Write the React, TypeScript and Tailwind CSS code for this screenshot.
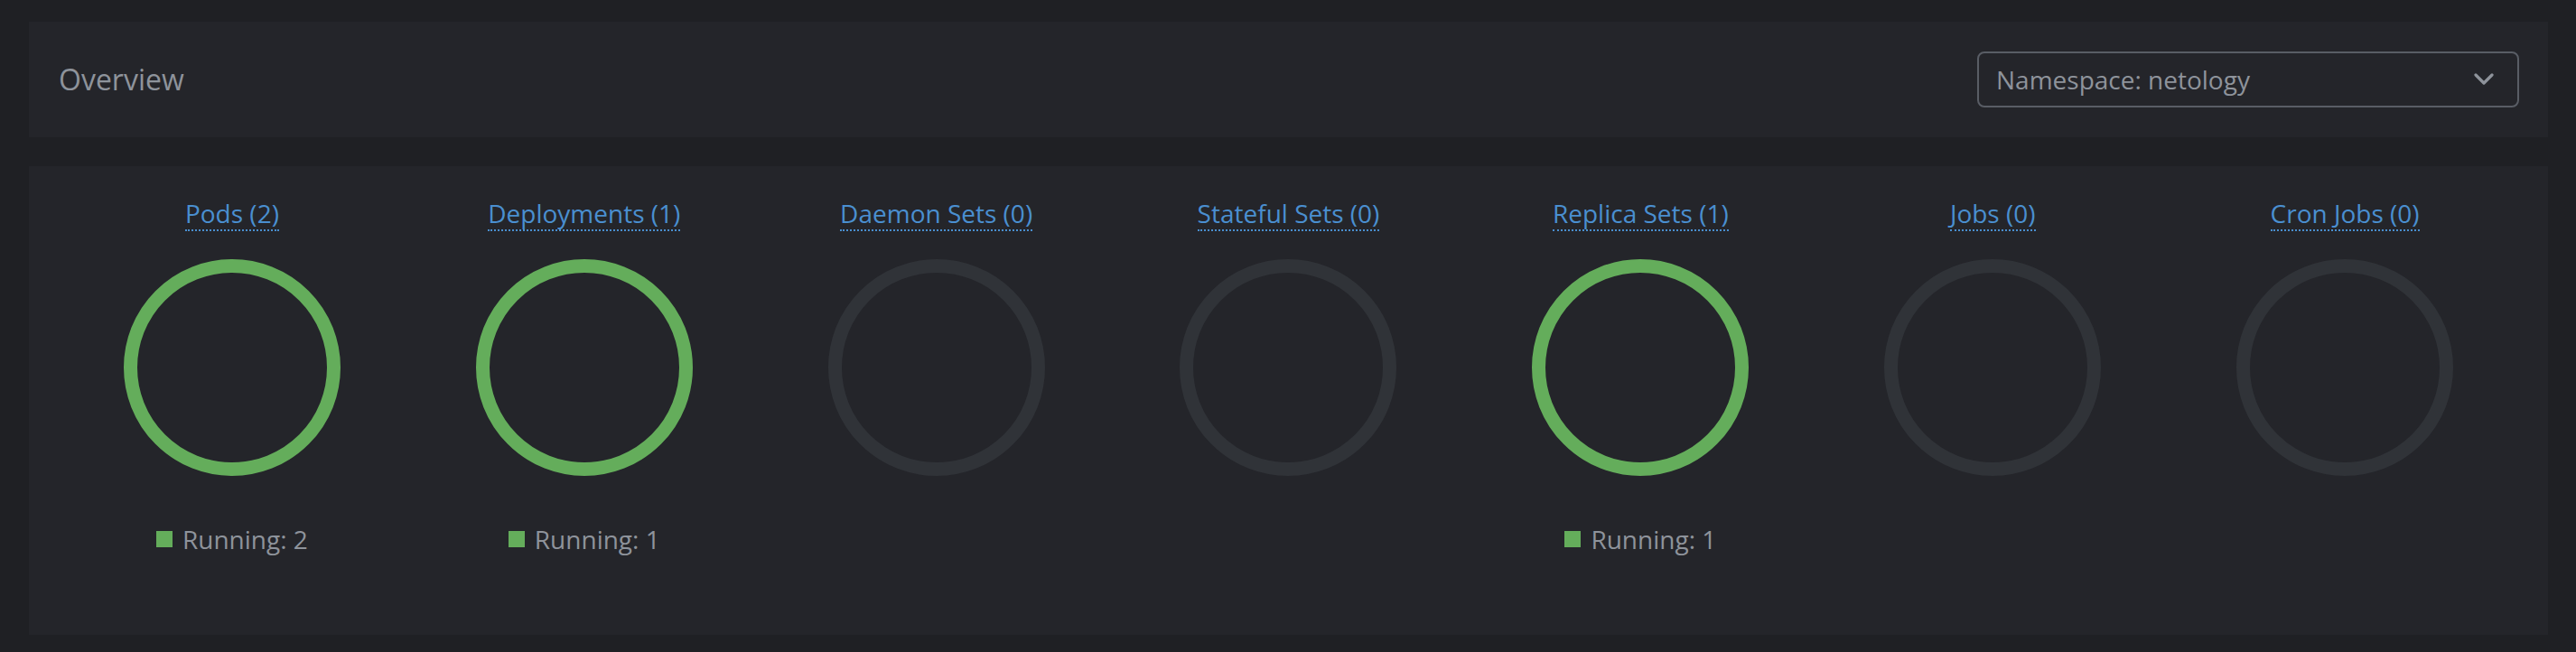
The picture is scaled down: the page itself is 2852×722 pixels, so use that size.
import React from 'react';

type Workload = {
  title: string;
  count: number;
  running: number;
};

const workloads: Workload[] = [
  { title: 'Pods', count: 2, running: 2 },
  { title: 'Deployments', count: 1, running: 1 },
  { title: 'Daemon Sets', count: 0, running: 0 },
  { title: 'Stateful Sets', count: 0, running: 0 },
  { title: 'Replica Sets', count: 1, running: 1 },
  { title: 'Jobs', count: 0, running: 0 },
  { title: 'Cron Jobs', count: 0, running: 0 },
];

const Ring: React.FC<{ active: boolean }> = ({ active }) => (
  <svg width="240" height="240" viewBox="0 0 240 240" className="block">
    <circle
      cx="120"
      cy="120"
      r="112.5"
      fill="none"
      stroke={active ? '#64ad5b' : '#303338'}
      strokeWidth="15"
    />
  </svg>
);

const WorkloadColumn: React.FC<{ item: Workload }> = ({ item }) => (
  <div className="flex flex-col items-center">
    <a
      href="#"
      className="text-[28px] leading-[36px] text-[#4a8fd0] border-b-2 border-dotted border-[#4a8fd0]"
    >
      {item.title} ({item.count})
    </a>
    <div className="mt-[31px]">
      <Ring active={item.running > 0} />
    </div>
    {item.running > 0 && (
      <div className="mt-[51px] flex items-center gap-[11px]">
        <span className="w-[18px] h-[18px] bg-[#64ad5b]" />
        <span className="text-[28px] leading-[38px] text-[#8e939b]">Running: {item.running}</span>
      </div>
    )}
  </div>
);

const App: React.FC = () => {
  return (
    <div
      className="min-h-[722px] bg-[#1f2024] pl-[32px] pr-[31px] pt-[24px] pb-[19px]"
      style={{ fontFamily: '"Open Sans", "Noto Sans", sans-serif' }}
    >
      <header className="h-[128px] bg-[#24252a] flex items-center justify-between pl-[33px] pr-[32px]">
        <h1 className="text-[32px] leading-[44px] text-[#8e939b] font-normal">Overview</h1>
        <button className="w-[600px] h-[62px] border-2 border-[#595d65] rounded-[8px] flex items-center justify-between pl-[19px] pr-[26px]">
          <span className="text-[28px] leading-[38px] text-[#8e939b]">Namespace: netology</span>
          <svg width="22" height="14" viewBox="0 0 22 14" fill="none">
            <polyline
              points="2,2 11,11 20,2"
              stroke="#8e939b"
              strokeWidth="3.2"
              strokeLinecap="round"
              strokeLinejoin="round"
            />
          </svg>
        </button>
      </header>

      <section className="mt-[32px] h-[519px] bg-[#24252a] px-[30px] pt-[34px]">
        <div className="grid grid-cols-7">
          {workloads.map((w) => (
            <WorkloadColumn key={w.title} item={w} />
          ))}
        </div>
      </section>
    </div>
  );
};

export default App;
